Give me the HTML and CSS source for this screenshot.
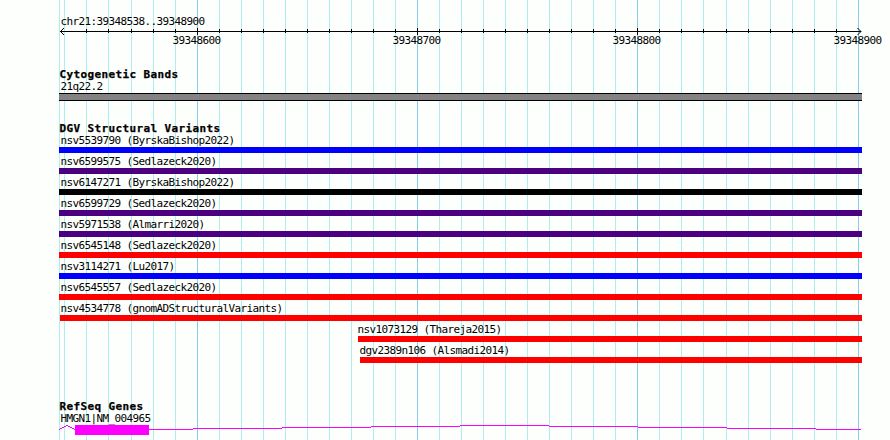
FILE: index.html
```
<!DOCTYPE html>
<html lang="en">
<head>
<meta charset="utf-8">
<title>chr21:39348538..39348900</title>
<link rel="stylesheet" href="styles.css">
</head>
<body>
<main class="browser">
  <svg class="gridlines" width="890" height="440" shape-rendering="crispEdges" aria-hidden="true">
    <path class="minor" d="M59.5 0v440M64.5 0v440M86.5 0v440M108.5 0v440M131.5 0v440M153.5 0v440M175.5 0v440M219.5 0v440M241.5 0v440M263.5 0v440M285.5 0v440M307.5 0v440M329.5 0v440M351.5 0v440M373.5 0v440M395.5 0v440M439.5 0v440M461.5 0v440M483.5 0v440M505.5 0v440M527.5 0v440M549.5 0v440M571.5 0v440M593.5 0v440M615.5 0v440M659.5 0v440M681.5 0v440M703.5 0v440M726.5 0v440M748.5 0v440M770.5 0v440M792.5 0v440M814.5 0v440M836.5 0v440"/>
    <path class="major" d="M197.5 0v440M417.5 0v440M637.5 0v440M858.5 0v440"/>
  </svg>

  <section class="ruler">
    <div class="label">chr21:39348538..39348900</div>
    <svg class="axis" width="803" height="9" viewBox="59 27 803 9" shape-rendering="crispEdges">
      <path d="M60 31.5H861M86.5 29v4M108.5 29v4M131.5 29v4M153.5 29v4M175.5 29v4M197.5 28v7M219.5 29v4M241.5 29v4M263.5 29v4M285.5 29v4M307.5 29v4M329.5 29v4M351.5 29v4M373.5 29v4M395.5 29v4M417.5 28v7M439.5 29v4M461.5 29v4M483.5 29v4M505.5 29v4M527.5 29v4M549.5 29v4M571.5 29v4M593.5 29v4M615.5 29v4M637.5 28v7M659.5 29v4M681.5 29v4M703.5 29v4M726.5 29v4M748.5 29v4M770.5 29v4M792.5 29v4M814.5 29v4M836.5 29v4"/>
      <path d="M64 28L60.5 31.5L64 35M857.500 28L861 31.500L857.500 35" shape-rendering="auto"/>
    </svg>
    <div class="ticks"><span>39348600</span><span>39348700</span><span>39348800</span><span>39348900</span></div>
  </section>

  <section class="track bands">
    <h2>Cytogenetic Bands</h2>
    <div class="label">21q22.2</div>
    <div class="band"></div>
  </section>

  <section class="track variants">
    <h2>DGV Structural Variants</h2>
    <div class="feature"><div class="label">nsv5539790 (ByrskaBishop2022)</div><div class="bar blue"></div></div>
    <div class="feature"><div class="label">nsv6599575 (Sedlazeck2020)</div><div class="bar indigo"></div></div>
    <div class="feature"><div class="label">nsv6147271 (ByrskaBishop2022)</div><div class="bar black"></div></div>
    <div class="feature"><div class="label">nsv6599729 (Sedlazeck2020)</div><div class="bar indigo"></div></div>
    <div class="feature"><div class="label">nsv5971538 (Almarri2020)</div><div class="bar indigo"></div></div>
    <div class="feature"><div class="label">nsv6545148 (Sedlazeck2020)</div><div class="bar red"></div></div>
    <div class="feature"><div class="label">nsv3114271 (Lu2017)</div><div class="bar blue"></div></div>
    <div class="feature"><div class="label">nsv6545557 (Sedlazeck2020)</div><div class="bar red"></div></div>
    <div class="feature"><div class="label">nsv4534778 (gnomADStructuralVariants)</div><div class="bar red inset"></div></div>
    <div class="feature thareja"><div class="label">nsv1073129 (Thareja2015)</div><div class="bar red"></div></div>
    <div class="feature alsmadi"><div class="label">dgv2389n106 (Alsmadi2014)</div><div class="bar red"></div></div>
  </section>

  <section class="track genes">
    <h2>RefSeq Genes</h2>
    <div class="label">HMGN1|NM_004965</div>
    <svg class="gene" width="803" height="10" viewBox="59 425 803 10" shape-rendering="crispEdges">
      <path d="M59 429.500h1M60 428.500h2M62 427.500h2M64 426.500h2M66 425.500h2M68 426.500h2M70 427.500h2M72 428.500h2M74 429.500h1M149 429.500H193M193 428.500H282M282 427.500H371M371 426.500H460M460 425.500H549M549 426.500H638M638 427.500H727M727 428.500H816M816 429.500H861"/>
      <rect x="75" y="425" width="74" height="10"/>
    </svg>
  </section>
</main>
</body>
</html>
```
FILE: styles.css
```
body {
  margin: 0;
  background: #fdfffc;
  color: #000;
}

.browser {
  position: relative;
  box-sizing: border-box;
  width: 890px;
  height: 440px;
  padding: 15px 0 0 59px;
  overflow: hidden;
  font-family: "DejaVu Sans Mono", monospace;
  font-size: 11px;
}

.gridlines {
  position: absolute;
  inset: 0;
}

.gridlines path { fill: none; stroke-width: 1; }
.minor { stroke: #afeeee; }
.major { stroke: #87ceeb; }

section { position: relative; }

svg { display: block; }

.label {
  height: 13px;
  padding-left: 1.4px;
  line-height: 13px;
  letter-spacing: -0.622px;
  white-space: pre;
}

.ruler { height: 54px; }
.ruler .label { height: 12px; }
.axis path { fill: none; stroke: #000; stroke-width: 1; }

.ticks {
  display: grid;
  grid-template-columns: 220px 220px 221px 48px;
  padding-left: 113.500px;
  margin-top: -2px;
  line-height: 13px;
  letter-spacing: -0.622px;
}

.track h2 {
  height: 12px;
  margin: 0;
  padding-left: 0.500px;
  font-size: 11px;
  line-height: 12px;
  font-weight: bold;
  letter-spacing: 0.378px;
  -webkit-text-stroke: 0.25px #000;
  white-space: pre;
}

.bands { height: 54px; }
.bands .label { line-height: 11px; }

.band {
  box-sizing: border-box;
  width: 803px;
  height: 8px;
  margin-top: -1px;
  border: 1px solid #000;
  border-width: 1px 0;
  background: #848284;
}

.variants { height: 278px; }

.feature { width: 803px; height: 21px; }
.variants h2 { margin-bottom: -1px; }
.thareja { width: 504px; margin-left: 299px; }
.alsmadi { width: 502px; margin-left: 301px; }
.thareja .label, .alsmadi .label { padding-left: 0; text-indent: -0.500px; }

.bar { height: 6px; }
.inset { margin-left: 1px; }
.blue { background: #0000ff; }
.indigo { background: #4b0082; }
.black { background: #000; }
.red { background: #ff0000; }

.genes .label { height: 12px; line-height: 11px; }
.gene path { fill: none; stroke: #ff00ff; stroke-width: 1; }
.gene rect { fill: #ff00ff; }
```
